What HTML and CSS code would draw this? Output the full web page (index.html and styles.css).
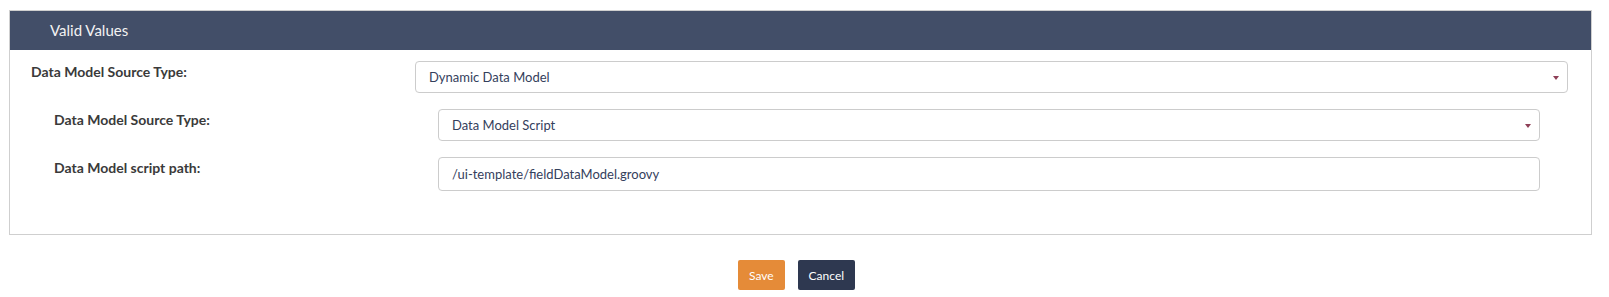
FILE: index.html
```html
<!DOCTYPE html>
<html lang="en">
<head>
  <meta charset="UTF-8">
  <title>Valid Values</title>
  <link rel="stylesheet" href="styles.css">
</head>
<body>

<div class="panel">
  <div class="panel-heading">Valid Values</div>
  <div class="panel-body">
    <div class="form-row">
      <label class="form-label">Data Model Source Type:</label>
      <div class="select-box">Dynamic Data Model</div>
    </div>

    <div class="sub-group">
      <div class="form-row">
        <label class="form-label">Data Model Source Type:</label>
        <div class="select-box">Data Model Script</div>
      </div>
      <div class="form-row">
        <label class="form-label">Data Model script path:</label>
        <input class="text-input" type="text" value="/ui-template/fieldDataModel.groovy">
      </div>
    </div>
  </div>
</div>

<div class="actions">
  <button class="btn btn-save">Save</button>
  <button class="btn btn-cancel">Cancel</button>
</div>

</body>
</html>
```

FILE: styles.css
```css
body {
  font-family: Lato, "Liberation Sans", sans-serif;
  background-color: #fff;
  margin: 0;
  padding: 10px 17px 0 9px;
}
.panel {
  border: 1px solid #cfcfcf;
  height: 223px;
}
.panel-heading {
  background-color: #424e68;
  color: #f2f2f2;
  font-size: 15px;
  height: 39px;
  line-height: 39px;
  padding-left: 40px;
  box-sizing: border-box;
}
.panel-body {
  padding: 11px 23px 0 21px;
}
.form-row {
  display: flex;
  align-items: flex-start;
  margin-bottom: 16px;
}
.form-label {
  flex: 0 0 384px;
  font-size: 14px;
  font-weight: bold;
  color: #3a3a3a;
  padding-top: 2px;
}
.sub-group {
  margin: 0 28px 0 23px;
}
.select-box,
.text-input {
  flex: 1;
  box-sizing: border-box;
  border: 1px solid #cccccc;
  border-radius: 4px;
  font-family: Lato, "Liberation Sans", sans-serif;
  font-size: 13px;
  color: #34405c;
  padding: 0 13px;
}
.select-box {
  position: relative;
  height: 32px;
  line-height: 30px;
}
.select-box::after {
  content: "";
  position: absolute;
  right: 8px;
  top: 14px;
  border-left: 3px solid transparent;
  border-right: 3px solid transparent;
  border-top: 4px solid #8e3f57;
}
.text-input {
  height: 34px;
  margin: 0;
  outline: none;
}
.actions {
  display: flex;
  justify-content: center;
  gap: 13px;
  margin-top: 25px;
  padding-right: 8px;
}
.btn {
  font-family: Lato, "Liberation Sans", sans-serif;
  font-size: 12px;
  color: #fff;
  border: none;
  border-radius: 2px;
  height: 30px;
  padding: 0 11px;
}
.btn-save {
  background-color: #e58b38;
}
.btn-cancel {
  background-color: #2e3850;
}
```
